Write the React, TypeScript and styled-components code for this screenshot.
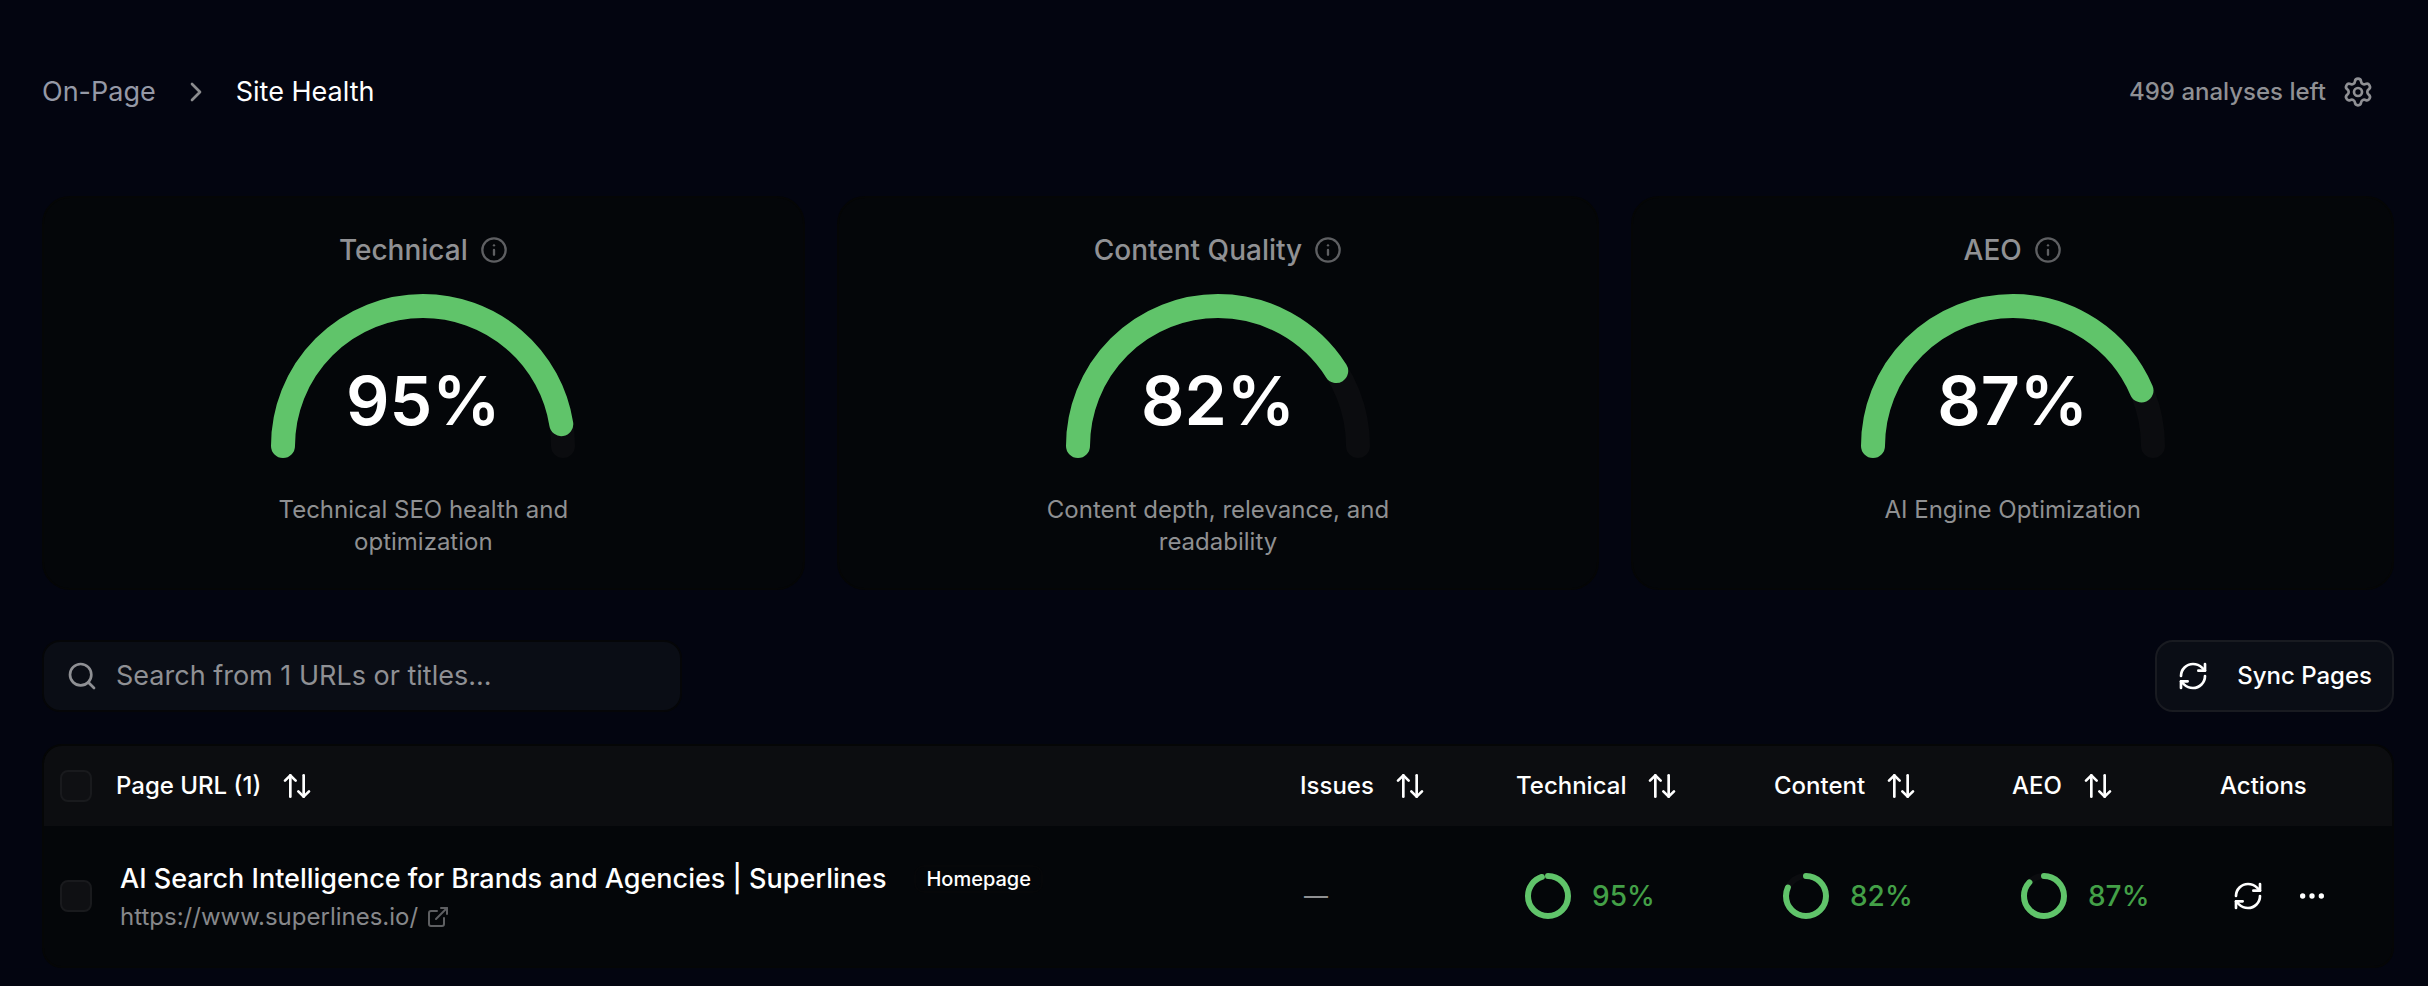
import React from "react";
import styled, { createGlobalStyle } from "styled-components";
import {
  ArrowUpDown,
  ChevronRight,
  Ellipsis,
  ExternalLink,
  Info,
  RefreshCw,
  Search,
  Settings,
} from "lucide-react";

const GlobalStyle = createGlobalStyle`
  *, *::before, *::after { box-sizing: border-box; }
  body {
    margin: 0;
    background: #030510;
    color: #fff;
    font-family: Inter, "Liberation Sans", sans-serif;
    font-size: 24px;
    line-height: 32px;
    -webkit-font-smoothing: antialiased;
  }
  button, input { font: inherit; color: inherit; }
  svg { display: block; flex: none; }
`;

const Page = styled.main`
  min-height: 100vh;
  padding: 64px 34px 18px 42px;
`;

const TopBar = styled.header`
  display: flex;
  justify-content: space-between;
  align-items: center;
  height: 56px;
  margin-bottom: 76px;
  padding-right: 20px;
`;

const Crumbs = styled.nav`
  display: flex;
  align-items: center;
  gap: 24px;
  font-size: 27px;
  line-height: 40px;

  svg { color: #8b8c8e; }
`;

const CrumbLink = styled.a`
  color: #9599a6;
  text-decoration: none;
`;

const CurrentCrumb = styled.span`
  color: #fff;
`;

const Quota = styled.div`
  display: flex;
  align-items: center;
  gap: 16px;
  font-weight: 500;
  color: #8f9094;
`;

const IconButton = styled.button`
  display: flex;
  align-items: center;
  justify-content: center;
  padding: 0;
  border: 0;
  background: none;
  cursor: pointer;
`;

const Cards = styled.section`
  display: grid;
  grid-template-columns: repeat(3, minmax(0, 1fr));
  gap: 32px;
  margin-bottom: 50px;
`;

const Card = styled.article`
  display: flex;
  flex-direction: column;
  align-items: center;
  padding: 30px;
  border: 2px solid #050606;
  border-radius: 28px;
  background: #040609;
`;

const CardTitle = styled.h2`
  display: flex;
  align-items: center;
  gap: 12px;
  margin: 0 0 22px;
  font-size: 28px;
  line-height: 44px;
  font-weight: 500;
  color: #909194;

  svg { color: #5e5f62; }
`;

const GaugeBox = styled.div`
  display: grid;
  justify-items: center;
  align-items: end;
  margin-bottom: 28px;

  > * { grid-area: 1 / 1; }
`;

const GaugeValue = styled.strong`
  margin-bottom: 30px;
  font-size: 68px;
  line-height: 72px;
  font-weight: 600;
`;

const CardText = styled.p`
  margin: 0;
  max-width: 384px;
  text-align: center;
  color: #8f9092;
`;

const Toolbar = styled.div`
  display: flex;
  justify-content: space-between;
  align-items: center;
  gap: 32px;
  margin-bottom: 32px;
`;

const SearchBox = styled.label`
  display: flex;
  align-items: center;
  gap: 18px;
  width: 640px;
  height: 72px;
  padding: 0 22px;
  border: 2px solid #050608;
  border-radius: 18px;
  background: #0a0d15;
  color: #8f9094;
`;

const SearchInput = styled.input`
  flex: 1;
  min-width: 0;
  padding: 0;
  border: 0;
  outline: 0;
  background: none;
  font-size: 27px;
  line-height: 40px;

  &::placeholder { color: #8f9094; opacity: 1; }
`;

const SyncButton = styled.button`
  display: flex;
  align-items: center;
  gap: 28px;
  height: 72px;
  padding: 0 20px;
  border: 2px solid #191b21;
  border-radius: 18px;
  background: #0a0d15;
  font-weight: 500;
  cursor: pointer;
`;

const TablePanel = styled.div`
  overflow: hidden;
  border: 2px solid #050606;
  border-radius: 20px;
  background: #040609;
`;

const Table = styled.table`
  width: 100%;
  table-layout: fixed;
  border-collapse: collapse;
  text-align: left;
`;

const Col = styled.col<{ $width?: number }>`
  width: ${(p) => (p.$width ? p.$width + "px" : "auto")};
`;

const HeadCell = styled.th`
  height: 80px;
  padding: 0;
  background: #0c0d10;
  font-weight: 500;
`;

const Cell = styled.td<{ $inset?: number }>`
  height: 140px;
  padding: 0 0 0 ${(p) => p.$inset ?? 0}px;
`;

const SortButton = styled.button`
  display: flex;
  align-items: center;
  gap: 20px;
  padding: 0;
  border: 0;
  background: none;
  font-weight: 500;
  cursor: pointer;
`;

const Checkbox = styled.input`
  display: block;
  appearance: none;
  width: 32px;
  height: 32px;
  margin: 0 0 0 16px;
  border: 2px solid #191a1d;
  border-radius: 8px;
  background: #0f1013;
`;

const TitleLine = styled.div`
  display: flex;
  align-items: center;
  gap: 28px;
  margin-bottom: 2px;
`;

const PageTitle = styled.span`
  font-size: 27px;
  line-height: 40px;
  font-weight: 500;
`;

const Badge = styled.span`
  padding: 0 10px;
  border: 2px solid #060709;
  border-radius: 10px;
  font-size: 20px;
  line-height: 24px;
  font-weight: 500;
`;

const UrlLink = styled.a`
  display: inline-flex;
  align-items: center;
  gap: 8px;
  color: #87888b;
  text-decoration: none;

  svg { color: #5e5f62; }
`;

const Muted = styled.span`
  color: #8f9092;
`;

const Score = styled.div`
  display: flex;
  align-items: center;
  gap: 20px;
  font-size: 28px;
  line-height: 40px;
  font-weight: 500;
  color: #43a047;
`;

const Actions = styled.div`
  display: flex;
  align-items: center;
  gap: 32px;
`;

const GREEN = "#60c46a";
const TRACK = "#0b0c0f";

function Gauge({ value }: { value: number }) {
  const arc = "M12 152a140 140 0 0 1 280 0";
  return (
    <svg width="304" height="172" viewBox="0 0 304 172" fill="none" strokeWidth="24" strokeLinecap="round" aria-hidden="true">
      <path d={arc} stroke={TRACK} />
      <path d={arc} stroke={GREEN} pathLength={100} strokeDasharray={`${value} 200`} />
    </svg>
  );
}

function Ring({ value }: { value: number }) {
  return (
    <svg width="48" height="48" viewBox="0 0 48 48" fill="none" strokeWidth="6" aria-hidden="true">
      <circle cx="24" cy="24" r="20" stroke={TRACK} />
      <circle
        cx="24"
        cy="24"
        r="20"
        stroke={GREEN}
        strokeLinecap="round"
        pathLength={100}
        strokeDasharray={`${value} 100`}
        transform="rotate(-90 24 24)"
      />
    </svg>
  );
}

const metrics = [
  { name: "Technical", value: 95, text: "Technical SEO health and optimization" },
  { name: "Content Quality", value: 82, text: "Content depth, relevance, and readability" },
  { name: "AEO", value: 87, text: "AI Engine Optimization" },
];

const sortable = ["Page URL (1)", "Issues", "Technical", "Content", "AEO"];

export default function App() {
  return (
    <>
      <GlobalStyle />
      <Page>
        <TopBar>
          <Crumbs aria-label="Breadcrumb">
            <CrumbLink href="#on-page">On-Page</CrumbLink>
            <ChevronRight size={32} />
            <CurrentCrumb aria-current="page">Site Health</CurrentCrumb>
          </Crumbs>
          <Quota>
            499 analyses left
            <IconButton aria-label="Settings">
              <Settings size={32} />
            </IconButton>
          </Quota>
        </TopBar>

        <Cards>
          {metrics.map((m) => (
            <Card key={m.name}>
              <CardTitle>
                {m.name}
                <Info size={28} />
              </CardTitle>
              <GaugeBox>
                <Gauge value={m.value} />
                <GaugeValue>{m.value}%</GaugeValue>
              </GaugeBox>
              <CardText>{m.text}</CardText>
            </Card>
          ))}
        </Cards>

        <Toolbar>
          <SearchBox>
            <Search size={32} />
            <SearchInput type="text" aria-label="Search pages" placeholder="Search from 1 URLs or titles..." />
          </SearchBox>
          <SyncButton>
            <RefreshCw size={32} />
            Sync Pages
          </SyncButton>
        </Toolbar>

        <TablePanel>
          <Table>
            <colgroup>
              <Col $width={72} />
              <Col />
              <Col $width={216} />
              <Col $width={258} />
              <Col $width={238} />
              <Col $width={208} />
              <Col $width={172} />
            </colgroup>
            <thead>
              <tr>
                <HeadCell>
                  <Checkbox type="checkbox" aria-label="Select all pages" />
                </HeadCell>
                {sortable.map((label) => (
                  <HeadCell key={label}>
                    <SortButton>
                      {label}
                      <ArrowUpDown size={32} />
                    </SortButton>
                  </HeadCell>
                ))}
                <HeadCell>Actions</HeadCell>
              </tr>
            </thead>
            <tbody>
              <tr>
                <Cell>
                  <Checkbox type="checkbox" aria-label="Select page" />
                </Cell>
                <Cell $inset={4}>
                  <TitleLine>
                    <PageTitle>AI Search Intelligence for Brands and Agencies | Superlines</PageTitle>
                    <Badge>Homepage</Badge>
                  </TitleLine>
                  <UrlLink href="https://www.superlines.io/">
                    https://www.superlines.io/
                    <ExternalLink size={24} />
                  </UrlLink>
                </Cell>
                <Cell $inset={4}>
                  <Muted>—</Muted>
                </Cell>
                {metrics.map((m) => (
                  <Cell key={m.name} $inset={8}>
                    <Score>
                      <Ring value={m.value} />
                      {m.value}%
                    </Score>
                  </Cell>
                ))}
                <Cell $inset={12}>
                  <Actions>
                    <IconButton aria-label="Re-analyse page">
                      <RefreshCw size={32} />
                    </IconButton>
                    <IconButton aria-label="More actions">
                      <Ellipsis size={32} />
                    </IconButton>
                  </Actions>
                </Cell>
              </tr>
            </tbody>
          </Table>
        </TablePanel>
      </Page>
    </>
  );
}
